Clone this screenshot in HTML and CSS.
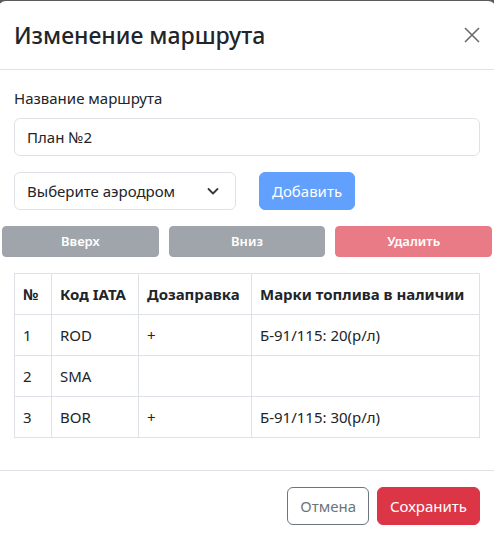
FILE: index.html
```html
<!DOCTYPE html>
<html lang="ru">
<head>
<meta charset="utf-8">
<link rel="stylesheet" href="styles.css">
</head>
<body>
<div class="modal">
  <div class="modal-header">
    <h4 class="modal-title">Изменение маршрута</h4>
    <button class="btn-close" aria-label="Закрыть">
      <svg viewBox="0 0 16 16" width="16" height="16"><path d="M1 1L15 15M15 1L1 15" stroke="#6b6b6b" stroke-width="1.6" fill="none"/></svg>
    </button>
  </div>
  <div class="modal-body">
    <label class="form-label">Название маршрута</label>
    <div class="form-control">План №2</div>
    <div class="add-row">
      <div class="form-select">
        <span>Выберите аэродром</span>
        <svg viewBox="0 0 16 16" width="16" height="16"><path d="M3.5 6l4.5 4.5L12.5 6" stroke="#343a40" stroke-width="1.8" fill="none" stroke-linecap="round" stroke-linejoin="round"/></svg>
      </div>
      <button class="btn btn-primary disabled">Добавить</button>
    </div>
    <div class="move-row">
      <button class="btn btn-sm btn-secondary disabled">Вверх</button>
      <button class="btn btn-sm btn-secondary disabled">Вниз</button>
      <button class="btn btn-sm btn-danger disabled">Удалить</button>
    </div>
    <table class="table">
      <thead>
        <tr><th class="c1">№</th><th class="c2">Код IATA</th><th class="c3">Дозаправка</th><th class="c4">Марки топлива в наличии</th></tr>
      </thead>
      <tbody>
        <tr><td>1</td><td>ROD</td><td>+</td><td>Б-91/115: 20(р/л)</td></tr>
        <tr><td>2</td><td>SMA</td><td></td><td></td></tr>
        <tr><td>3</td><td>BOR</td><td>+</td><td>Б-91/115: 30(р/л)</td></tr>
      </tbody>
    </table>
  </div>
  <div class="modal-footer">
    <button class="btn btn-outline-secondary">Отмена</button>
    <button class="btn btn-danger">Сохранить</button>
  </div>
</div>
</body>
</html>
```

FILE: styles.css
```css
html { background: #5b5b5b; }
body {
  margin: 0;
  font-family: "Noto Sans", "Open Sans", sans-serif;
  font-size: 15px;
  line-height: 24px;
  color: #212529;
}
.modal {
  margin-top: 1px;
  margin-left: -2px;
  width: 498px;
  height: 538px;
  overflow: hidden;
  background: #fff;
  border-radius: 8px 8px 0 0;
}
.modal-header {
  display: flex;
  align-items: center;
  justify-content: space-between;
  padding: 16px;
  height: 36px;
  border-bottom: 1px solid #dee2e6;
}
.modal-title {
  margin: 0;
  font-size: 23px;
  font-weight: 500;
  line-height: 36px;
}
.btn-close {
  border: 0;
  background: none;
  padding: 0;
  width: 16px;
  height: 16px;
  display: flex;
}
.modal-body {
  padding: 16px 16px 32px 16px;
}
.form-label {
  display: block;
  margin-bottom: 8px;
}
.form-control {
  height: 36px;
  border: 1px solid #dee2e6;
  border-radius: 6px;
  padding: 0 12px;
  display: flex;
  align-items: center;
}
.add-row {
  display: flex;
  gap: 23px;
  margin-top: 16px;
}
.form-select {
  width: 194px;
  height: 36px;
  border: 1px solid #dee2e6;
  border-radius: 6px;
  padding: 0 14px 0 12px;
  display: flex;
  align-items: center;
  justify-content: space-between;
}
.btn {
  font-family: inherit;
  font-size: 15px;
  line-height: 24px;
  border: 1px solid transparent;
  border-radius: 6px;
  padding: 6px 12px;
  color: #fff;
  cursor: pointer;
}
.btn-sm {
  font-size: 13px;
  line-height: 21px;
  padding: 4px 8px;
  font-weight: 600;
  border-radius: 4px;
}
.btn-primary { background: #0d6efd; border-color: #0d6efd; }
.btn-secondary { background: #6c757d; border-color: #6c757d; }
.btn-danger { background: #dc3545; border-color: #dc3545; }
.btn.disabled { opacity: .65; }
.btn-outline-secondary { background: #fff; border-color: #6c757d; color: #6c757d; }
.move-row {
  display: flex;
  gap: 10px;
  margin: 16px -12px 16px -12px;
}
.move-row .btn { flex: 1; }
.table {
  width: 100%;
  border-collapse: collapse;
}
.table th, .table td {
  border: 1px solid #dee2e6;
  padding: 8px;
  height: 24px;
  text-align: left;
  white-space: nowrap;
}
.table th { font-weight: 700; }
.c1 { width: 20px; }
.c2 { width: 70px; }
.c3 { width: 96px; }
.modal-footer {
  border-top: 1px solid #dee2e6;
  padding: 12px;
  display: flex;
  justify-content: flex-end;
}
.modal-footer .btn { margin: 4px; }
```
